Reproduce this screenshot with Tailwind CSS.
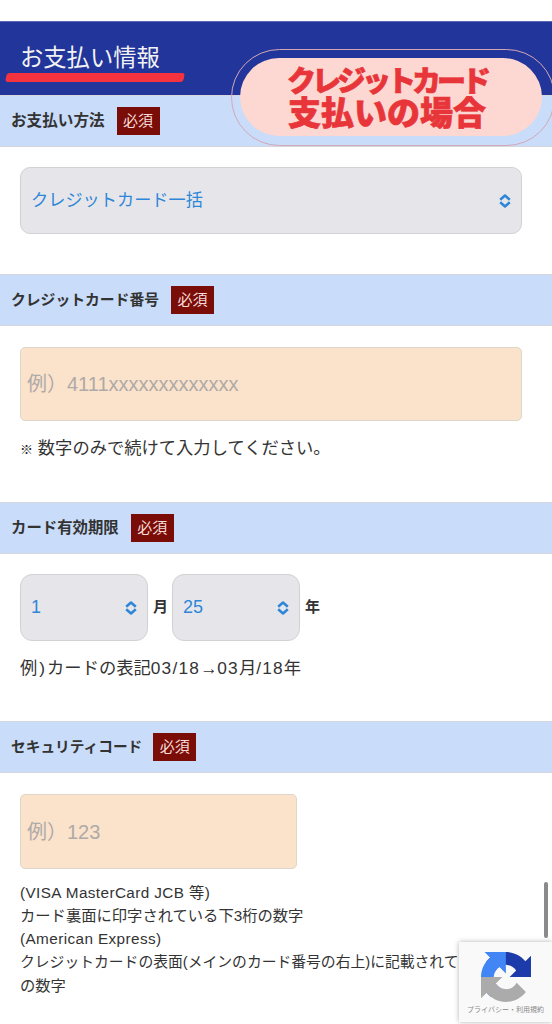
<!DOCTYPE html>
<html lang="ja">
  <head>
    <meta charset="UTF-8" />
    <meta name="viewport" content="width=device-width, initial-scale=1.0" />
    <script src="https://cdn.jsdelivr.net/npm/@tailwindcss/browser@4"></script>
    <title>お支払い情報</title>
  </head>

  <body class="bg-white">
    <main class="relative w-[552px] h-[1024px] overflow-hidden pt-[21px] font-['Liberation_Sans','Noto_Sans_CJK_JP',sans-serif] text-[#333]">
      <!-- Title bar -->
      <header class="relative h-[74px] bg-[#21359a] border-t border-[#5a68b5]">
        <h1 class="pl-[20px] pt-[18px] text-[23.3px] leading-[36px] text-[#f2f2f2]">お支払い情報</h1>
        <div class="absolute left-[6px] top-[51px] w-[178px] h-[9px] bg-[#f5333f] rounded-[3px] -skew-x-12"></div>
      </header>

      <!-- Payment method -->
      <div class="flex items-center h-[52px] pl-[11px] gap-[12px] bg-[#c9dcf9] border-y border-[#d5d5dd]">
        <span class="text-[15.6px] font-bold">お支払い方法</span>
        <span class="w-[43px] h-[28px] flex items-center justify-center bg-[#7a0d07] text-[15px] text-[#f5dcd8]">必須</span>
      </div>
      <section class="pt-[20px] pb-[40px] pl-[20px]">
        <div class="flex items-center justify-between w-[502px] h-[67px] pl-[10px] pr-[9px] bg-[#e6e6ea] border border-[#d2d2d4] rounded-[10px] text-[#2f86d8] text-[17.2px]">
          <span>クレジットカード一括</span>
          <svg class="w-[14px] h-[16px]" viewBox="0 0 14 16" fill="none" stroke="#2f86d8" stroke-width="2.5" stroke-linejoin="round"><path d="M2.2 6.8 7 2.5l4.8 4.3M2.2 9.2 7 13.5l4.8-4.3" /></svg>
        </div>
      </section>

      <!-- Card number -->
      <div class="flex items-center h-[52px] pl-[11px] gap-[12px] bg-[#c9dcf9] border-y border-[#d5d5dd]">
        <span class="text-[14.8px] font-bold">クレジットカード番号</span>
        <span class="w-[43px] h-[28px] flex items-center justify-center bg-[#7a0d07] text-[15px] text-[#f5dcd8]">必須</span>
      </div>
      <section class="pt-[21px] pb-[41px] pl-[20px]">
        <div class="flex items-center w-[502px] h-[74px] pl-[6px] bg-[#fbe2cb] border border-[#dfd6ca] rounded-[5px] text-[#aeaaa7] text-[20px]">例）4111xxxxxxxxxxxxx</div>
        <p class="mt-[14px] h-[26px] leading-[26px] text-[17.3px]"><span class="text-[13px] font-bold text-[#222]">※</span> 数字のみで続けて入力してください。</p>
      </section>

      <!-- Expiry -->
      <div class="flex items-center h-[52px] pl-[11px] gap-[12px] bg-[#c9dcf9] border-y border-[#d5d5dd]">
        <span class="text-[15.4px] font-bold">カード有効期限</span>
        <span class="w-[43px] h-[28px] flex items-center justify-center bg-[#7a0d07] text-[15px] text-[#f5dcd8]">必須</span>
      </div>
      <section class="pt-[20px] pb-[40px] pl-[20px]">
        <div class="flex items-center text-[15px] font-bold">
          <div class="flex items-center justify-between w-[128px] h-[67px] pl-[10px] pr-[9px] bg-[#e6e6ea] border border-[#d2d2d4] rounded-[12px] text-[#2f86d8] text-[18px] font-normal">
            <span>1</span>
            <svg class="w-[14px] h-[16px]" viewBox="0 0 14 16" fill="none" stroke="#2f86d8" stroke-width="2.5" stroke-linejoin="round"><path d="M2.2 6.8 7 2.5l4.8 4.3M2.2 9.2 7 13.5l4.8-4.3" /></svg>
          </div>
          <span class="w-[24px] pl-[5px]">月</span>
          <div class="flex items-center justify-between w-[128px] h-[67px] pl-[10px] pr-[9px] bg-[#e6e6ea] border border-[#d2d2d4] rounded-[12px] text-[#2f86d8] text-[18px] font-normal">
            <span>25</span>
            <svg class="w-[14px] h-[16px]" viewBox="0 0 14 16" fill="none" stroke="#2f86d8" stroke-width="2.5" stroke-linejoin="round"><path d="M2.2 6.8 7 2.5l4.8 4.3M2.2 9.2 7 13.5l4.8-4.3" /></svg>
          </div>
          <span class="pl-[5px]">年</span>
        </div>
        <p class="mt-[14px] h-[26px] leading-[26px] text-[17.3px]">例<span class="px-[2px]">)</span>カードの表記<span class="tracking-[1.2px]">03/18</span>→<span class="tracking-[1.2px]">03</span>月<span class="tracking-[1.2px]">/18</span>年</p>
      </section>

      <!-- Security code -->
      <div class="flex items-center h-[52px] pl-[11px] gap-[11px] bg-[#c9dcf9] border-y border-[#d5d5dd]">
        <span class="text-[14.7px] font-bold">セキュリティコード</span>
        <span class="w-[43px] h-[28px] flex items-center justify-center bg-[#7a0d07] text-[15px] text-[#f5dcd8]">必須</span>
      </div>
      <section class="pt-[21px] pl-[20px]">
        <div class="flex items-center w-[277px] h-[75px] pl-[6px] bg-[#fbe2cb] border border-[#dfd6ca] rounded-[5px] text-[#aeaaa7] text-[20px]">例）123</div>
        <p class="mt-[12px] text-[15.3px] leading-[23px] whitespace-nowrap">
          <span class="tracking-[0.4px]">(VISA MasterCard JCB 等)</span><br />
          カード裏面に印字されている下3桁の数字<br />
          <span class="tracking-[0.4px]">(American Express)</span><br />
          <span class="text-[14.8px]">クレジットカードの表面(メインのカード番号の右上)に記載されている</span><br />
          の数字
        </p>
      </section>

      <!-- Callout over the page -->
      <div class="absolute left-[231px] top-[49px] w-[324px] h-[97px] rounded-full border-[1.5px] border-[#d3a8b6]"></div>
      <div class="absolute left-[240px] top-[58px] w-[302px] h-[78px] rounded-[40px] bg-[#fdd7d1] flex flex-col items-center justify-center pt-[1px] pr-[8px] font-black text-[#e8353a] [-webkit-text-stroke:0.7px_#e8353a]">
        <span class="text-[29px] leading-[32px] tracking-[-4px]">クレジットカード</span>
        <span class="text-[33px] leading-[32px]">支払いの場合</span>
      </div>

      <!-- Scrollbar -->
      <div class="absolute left-[544px] top-[882px] w-[4px] h-[56px] rounded-full bg-[#8a8a8a]"></div>

      <!-- reCAPTCHA badge -->
      <div class="absolute left-[459px] top-[942px] w-[93px] h-[80px] bg-[#f9f9f9] shadow-[0_0_5px_rgba(0,0,0,0.3)] flex flex-col items-center pt-[10px]">
        <svg class="w-[50px] h-[50px]" viewBox="0 0 64 64">
          <path fill="#1c3aa9" d="M64 31.955l-.033-1.37V4.687l-7.16 7.16C50.948 4.674 42.033.093 32.05.093c-10.4 0-19.622 4.96-25.458 12.64l11.736 11.86a15.55 15.55 0 0 1 4.754-5.334c2.05-1.6 4.952-2.906 8.968-2.906.485 0 .86.057 1.135.163 4.976.393 9.288 3.14 11.828 7.124l-8.307 8.307L64 31.953" />
          <path fill="#4285f4" d="M31.862.094l-1.37.033H4.594l7.16 7.16C4.58 13.147 0 22.06 0 32.046c0 10.4 4.96 19.622 12.64 25.458L24.5 45.768a15.55 15.55 0 0 1-5.334-4.754c-1.6-2.05-2.906-4.952-2.906-8.968 0-.485.057-.86.163-1.135.393-4.976 3.14-9.288 7.124-11.828l8.307 8.307L31.86.095" />
          <path fill="#ababab" d="M.001 32.045l.033 1.37v25.898l7.16-7.16c5.86 7.173 14.774 11.754 24.76 11.754 10.4 0 19.622-4.96 25.458-12.64l-11.736-11.86a15.55 15.55 0 0 1-4.754 5.334c-2.05 1.6-4.952 2.906-8.968 2.906-.485 0-.86-.057-1.135-.163-4.976-.393-9.288-3.14-11.828-7.124l8.307-8.307c-10.522.001-22.4.025-29.3-.008" />
        </svg>
        <span class="mt-[3px] text-[7px] leading-[10px] text-[#888] whitespace-nowrap">プライバシー・利用規約</span>
      </div>
    </main>
  </body>
</html>
